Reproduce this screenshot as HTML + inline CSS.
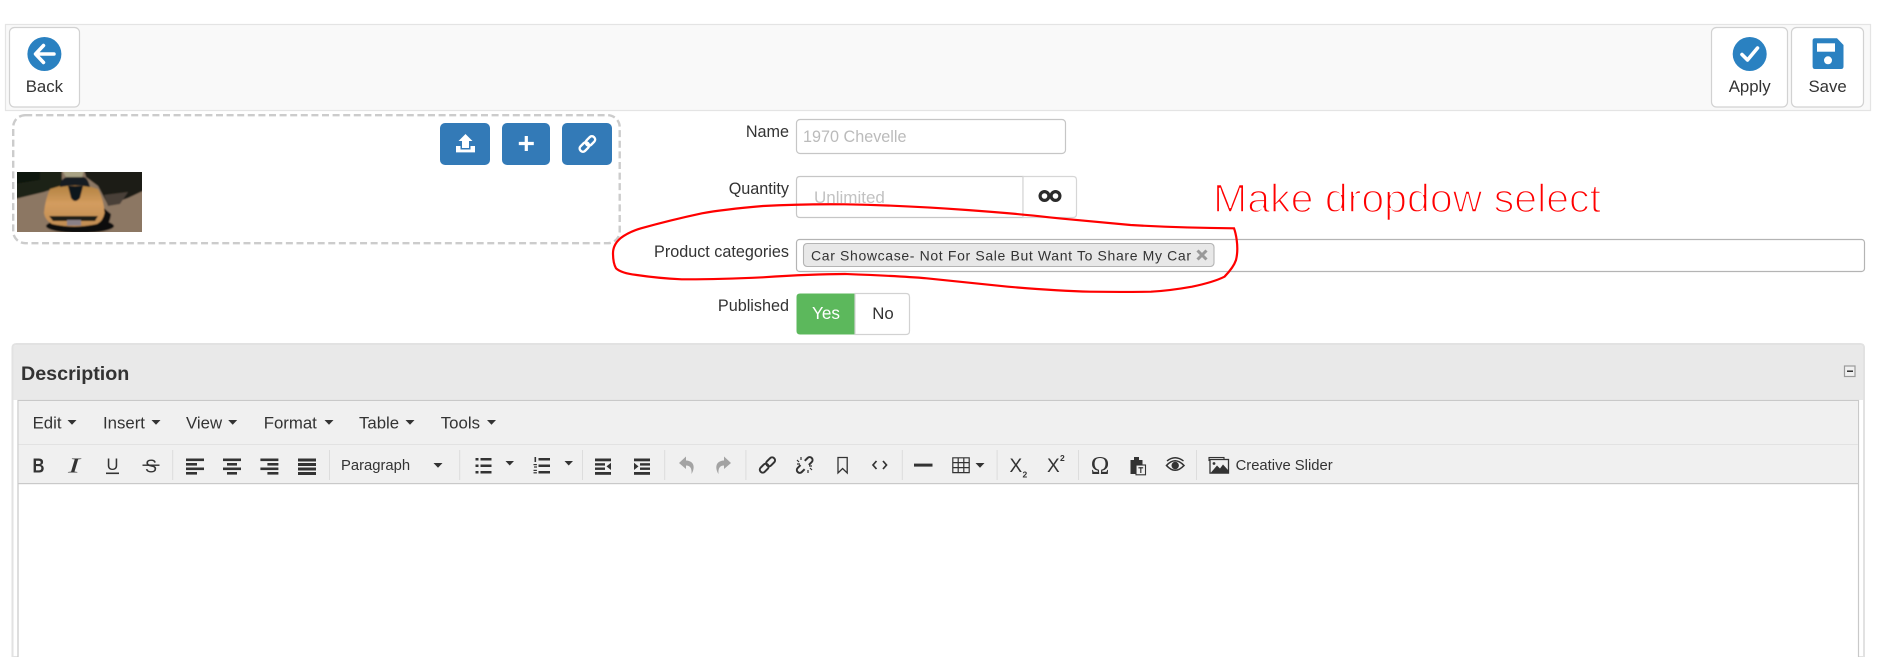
<!DOCTYPE html>
<html><head><meta charset="utf-8"><title>Edit product</title>
<style>
html,body{margin:0;padding:0;background:#fff;width:1884px;height:657px;overflow:hidden}
svg{display:block}
text{font-family:"Liberation Sans",sans-serif;fill:#333}
.l{font-size:16.2px;text-anchor:end}
.m{font-size:16.8px}
.c{font-size:16.8px;text-anchor:middle}
.i{fill:#333}
.s{fill:none;stroke:#333}
</style></head><body>
<svg width="1884" height="657" viewBox="0 0 1884 657" xmlns="http://www.w3.org/2000/svg">
<defs>
<filter id="b" x="-5%" y="-5%" width="110%" height="110%"><feGaussianBlur stdDeviation=".9"/></filter>
<linearGradient id="g" x1="0" y1="0" x2="0" y2="1"><stop offset="0" stop-color="#b08040"/><stop offset=".45" stop-color="#d39c5e"/><stop offset="1" stop-color="#c08c52"/></linearGradient>
<clipPath id="cc"><rect x="17" y="172" width="125" height="60"/></clipPath>
</defs>

<!-- top toolbar -->
<rect x="5.5" y="24.5" width="1865" height="86" fill="#f9f9f9" stroke="#e4e4e4" stroke-width="1.2"/>
<rect x="9.5" y="27.5" width="70" height="79.5" rx="5" fill="#fff" stroke="#d2d2d2" stroke-width="1.2"/>
<rect x="1711.5" y="27.5" width="76" height="79.5" rx="5" fill="#fff" stroke="#d2d2d2" stroke-width="1.2"/>
<rect x="1791.5" y="27.5" width="72" height="79.5" rx="5" fill="#fff" stroke="#d2d2d2" stroke-width="1.2"/>
<circle cx="44.4" cy="54" r="17" fill="#2a81c1"/>
<path d="M43.5 45.5 L35.5 54 L43.5 62.5 M37 54 H54" fill="none" stroke="#fff" stroke-width="3.5" stroke-linecap="round" stroke-linejoin="round"/>
<circle cx="1749.7" cy="54" r="17" fill="#2a81c1"/>
<path d="M1742 54.5 L1747.5 60 L1757.5 48" fill="none" stroke="#fff" stroke-width="3.6" stroke-linecap="round" stroke-linejoin="round"/>
<path d="M1815 38.3 H1837 L1843.5 45 V66.5 Q1843.5 69 1841 69 H1815 Q1812.6 69 1812.6 66.5 V40.8 Q1812.6 38.3 1815 38.3 Z" fill="#2a81c1"/>
<rect x="1817" y="43.3" width="18" height="8.4" fill="#fff"/>
<circle cx="1828" cy="60.3" r="4" fill="#fff"/>
<text class="c" x="44.4" y="92">Back</text>
<text class="c" x="1749.7" y="92">Apply</text>
<text class="c" x="1827.6" y="92">Save</text>

<!-- image box -->
<rect x="13.2" y="115.2" width="606.5" height="128" rx="12" fill="#fff" stroke="#ccc" stroke-width="2.4" stroke-dasharray="7 3.6"/>
<rect x="440" y="123" width="50" height="42" rx="5" fill="#337ab7"/>
<rect x="502" y="123" width="48" height="42" rx="5" fill="#337ab7"/>
<rect x="562" y="123" width="50" height="42" rx="5" fill="#337ab7"/>
<path d="M465.5 134 L472.5 141 H469 V148 H462 V141 H458.5 Z" fill="#fff"/>
<path d="M456 146 H460.5 V149.5 H470.5 V146 H475 V152.4 H456 Z" fill="#fff"/>
<path d="M526.3 136 V151 M518.8 143.5 H533.8" stroke="#fff" stroke-width="3.2" fill="none"/>
<g transform="translate(587.4 144) rotate(45)" fill="none" stroke="#fff" stroke-width="2.4">
<rect x="-3.2" y="-9.5" width="6.4" height="10.5" rx="3"/>
<rect x="-3.2" y="-1" width="6.4" height="10.5" rx="3"/>
</g>

<!-- car -->
<g clip-path="url(#cc)"><g filter="url(#b)">
<rect x="15" y="170" width="130" height="64" fill="#8c7764"/>
<path d="M15 170 H62 V186 L44 192 L15 199 Z" fill="#1a2416"/>
<path d="M15 170 H40 V180 L15 184 Z" fill="#0f170f"/>
<path d="M62 170 H84 L82 177 H66 Z" fill="#a8a284"/>
<path d="M84 170 H145 V190 L128 198 L108 205 L98 186 L86 177 Z" fill="#1c1c14"/>
<path d="M104 195 L128 192 L120 204 L108 206 Z" fill="#4a4138"/>
<ellipse cx="80" cy="226" rx="34" ry="7" fill="#0c0a09"/>
<path d="M100 205 L111 214 Q110 226 100 231 H90 Z" fill="#0c0a09"/>
<path d="M60 186 Q74 183 88 186 L98 189 Q104 200 104.500 213 Q103 221 97 224 Q74 229 52 224 Q45 220 44 213 Q45 200 50 189 Z" fill="url(#g)"/>
<path d="M60 187 Q61 178 67 177 H84 Q88 178 90 187 Q75 184 60 187 Z" fill="#141a22"/>
<path d="M68 186 H83 L80 198 Q75 204 71 198 Z" fill="#11131a"/>
<path d="M49 216 H98 L95 221 H53 Z" fill="#1f1a15"/>
<rect x="67" y="220" width="14" height="5.500" fill="#8a8088"/>
</g></g>

<!-- form labels -->
<text class="l" x="789" y="137">Name</text>
<text class="l" x="789" y="194">Quantity</text>
<text class="l" x="789" y="257">Product categories</text>
<text class="l" x="789" y="311">Published</text>

<rect x="796.5" y="119.5" width="269" height="34" rx="3.5" fill="#fff" stroke="#c6c6c6" stroke-width="1.2"/>
<text x="803" y="142" font-size="16.2" style="fill:#bbb">1970 Chevelle</text>

<path d="M1023 176.5 H800 Q796.5 176.5 796.5 180 V214 Q796.5 217.5 800 217.5 H1023 Z" fill="#fff" stroke="#c6c6c6" stroke-width="1.2"/>
<path d="M1023 176.5 H1073 Q1076.5 176.5 1076.5 180 V214 Q1076.5 217.5 1073 217.5 H1023 Z" fill="#fff" stroke="#d6d6d6" stroke-width="1.2"/>
<text x="814" y="203" font-size="17" style="fill:#c2c2c2">Unlimited</text>
<circle cx="1044.5" cy="196" r="4.4" fill="none" stroke="#2b2b2b" stroke-width="3.2"/>
<circle cx="1055.500" cy="196" r="4.4" fill="none" stroke="#2b2b2b" stroke-width="3.2"/>

<rect x="796.5" y="239.5" width="1068" height="32" rx="3" fill="#fff" stroke="#b4b4b4" stroke-width="1.2"/>
<rect x="803.5" y="243.5" width="410.5" height="23" rx="3.6" fill="#e8e8e8" stroke="#b4b4b4" stroke-width="1.1"/>
<text x="811" y="260.5" font-size="14" textLength="380" style="fill:#333">Car Showcase- Not For Sale But Want To Share My Car</text>
<path d="M1197.5 250.5 L1206.5 259.5 M1206.5 250.5 L1197.5 259.5" stroke="#999" stroke-width="3" fill="none"/>

<path d="M855 293.5 H800 Q796.5 293.5 796.5 297 V331 Q796.5 334.5 800 334.5 H855 Z" fill="#5cb85c"/>
<path d="M855 293.5 H906 Q909.5 293.5 909.5 297 V331 Q909.5 334.5 906 334.5 H855 Z" fill="#fff" stroke="#d2d2d2" stroke-width="1.2"/>
<text x="826" y="319" font-size="17.2" text-anchor="middle" style="fill:#fff">Yes</text>
<text x="883" y="319" font-size="16.8" text-anchor="middle">No</text>

<!-- description panel -->
<path d="M12.5 657 V348 Q12.5 344 16.5 344 H1860 Q1864 344 1864 348 V657 Z" fill="#fff" stroke="#e2e2e2" stroke-width="2"/>
<path d="M13.5 400 V348 Q13.5 345 16.5 345 H1860 Q1863 345 1863 348 V400 Z" fill="#e9e9e9"/>
<text x="21" y="380" font-size="19.7" font-weight="bold">Description</text>
<rect x="1844.5" y="366" width="10.5" height="10.5" fill="#f0f0f0" stroke="#9a9a9a" stroke-width="1.2"/>
<rect x="1847" y="370.5" width="6" height="1.4" fill="#222"/>

<rect x="18" y="400.5" width="1840.5" height="260" fill="#fff" stroke="#c9c9c9" stroke-width="1.2"/>
<rect x="18.6" y="401" width="1839.3" height="82.5" fill="#f0f0f0"/>
<rect x="18.6" y="444" width="1839.3" height="1" fill="#e2e2e2"/>
<rect x="18" y="483" width="1841" height="1.2" fill="#c9c9c9"/>

<!-- menu -->
<g class="menu">
<text class="m" x="32.6" y="428.5">Edit</text>
<text class="m" x="103" y="428.5">Insert</text>
<text class="m" x="186" y="428.5">View</text>
<text class="m" x="263.7" y="428.5">Format</text>
<text class="m" x="359" y="428.5">Table</text>
<text class="m" x="440.8" y="428.5">Tools</text>
</g>
<g fill="#333">
<path d="M67.5 420 H76.5 L72 424.8 Z"/><path d="M151.5 420 H160.5 L156 424.8 Z"/><path d="M228.2 420 H237.2 L232.7 424.8 Z"/><path d="M324.5 420 H333.5 L329 424.8 Z"/><path d="M405.5 420 H414.5 L410 424.8 Z"/><path d="M487 420 H496 L491.5 424.8 Z"/>
<path d="M433.5 463 H442.5 L438 467.8 Z"/><path d="M505.5 461 H514 L509.7 465.5 Z"/><path d="M564.5 461 H573 L568.7 465.5 Z"/><path d="M975.5 463 H984.5 L980 467.8 Z"/>
</g>

<!-- separators -->
<g fill="#ddd">
<rect x="172.2" y="450" width="1" height="30"/><rect x="329" y="450" width="1" height="30"/><rect x="459.2" y="450" width="1" height="30"/><rect x="582" y="450" width="1" height="30"/><rect x="664.2" y="450" width="1" height="30"/><rect x="745.4" y="450" width="1" height="30"/><rect x="901.8" y="450" width="1" height="30"/><rect x="996.6" y="450" width="1" height="30"/><rect x="1078" y="450" width="1" height="30"/><rect x="1196" y="450" width="1" height="30"/>
</g>

<!-- format icons -->
<text x="32.5" y="472.5" font-size="20" font-weight="bold" textLength="12" lengthAdjust="spacingAndGlyphs">B</text>
<text x="68" y="472.5" font-size="21" font-style="italic" style="font-family:'Liberation Serif',serif" textLength="12" lengthAdjust="spacingAndGlyphs">I</text>
<text x="106.5" y="470" font-size="17" textLength="12" lengthAdjust="spacingAndGlyphs">U</text>
<rect x="106" y="472.5" width="13" height="1.6" class="i"/>
<text x="145" y="472.5" font-size="18" textLength="12" lengthAdjust="spacingAndGlyphs">S</text>
<rect x="142.5" y="464.5" width="17" height="1.4" class="i"/>
<g class="i">
<rect x="186" y="458.5" width="18" height="2.6"/><rect x="186" y="463" width="11" height="2.6"/><rect x="186" y="467.5" width="18" height="2.6"/><rect x="186" y="472" width="11" height="2.6"/>
<rect x="223" y="458.5" width="18" height="2.6"/><rect x="227" y="463" width="10" height="2.6"/><rect x="223" y="467.5" width="18" height="2.6"/><rect x="227" y="472" width="10" height="2.6"/>
<rect x="260.4" y="458.5" width="18" height="2.6"/><rect x="267.4" y="463" width="11" height="2.6"/><rect x="260.4" y="467.5" width="18" height="2.6"/><rect x="267.4" y="472" width="11" height="2.6"/>
<rect x="298" y="458.5" width="18" height="3"/><rect x="298" y="463" width="18" height="3"/><rect x="298" y="467.5" width="18" height="3"/><rect x="298" y="472" width="18" height="3"/>
<!-- bullets -->
<rect x="475.5" y="458" width="3" height="2.5"/><rect x="475.5" y="464.5" width="3" height="2.5"/><rect x="475.5" y="471" width="3" height="2.5"/>
<rect x="480.5" y="458" width="11" height="2.5"/><rect x="480.5" y="464.5" width="11" height="2.5"/><rect x="480.5" y="471" width="11" height="2.5"/>
<!-- number list -->
<rect x="534.5" y="457" width="1.6" height="5"/><rect x="533.5" y="464" width="3.4" height="1.2"/><rect x="534" y="466.4" width="3" height="1.2"/><rect x="533.5" y="469.8" width="3.4" height="1.2"/><rect x="533.5" y="472.2" width="3.4" height="1.2"/>
<rect x="538.5" y="458" width="11.5" height="2.5"/><rect x="538.5" y="464.5" width="11.5" height="2.5"/><rect x="538.5" y="471" width="11.5" height="2.5"/>
<!-- outdent -->
<rect x="595" y="458.5" width="16" height="2.8"/><rect x="595" y="463.2" width="10" height="2.4"/><rect x="595" y="467.5" width="10" height="2.4"/><rect x="595" y="472" width="16" height="2.8"/>
<path d="M611 462.8 V470 L606.5 466.4 Z"/>
<!-- indent -->
<rect x="634" y="458.5" width="16" height="2.8"/><rect x="640" y="463.2" width="10" height="2.4"/><rect x="640" y="467.5" width="10" height="2.4"/><rect x="634" y="472" width="16" height="2.8"/>
<path d="M634 462.8 V470 L638.5 466.4 Z"/>
</g>

<!-- undo / redo -->
<path d="M686 456.5 L679 463 L686 469 V465.5 C690 465.5 692 468 691.5 474 C695 468.5 695 461 686 460.5 Z" fill="#a3a3a3"/>
<path d="M724 456.5 L731 463 L724 469 V465.5 C720 465.5 718 468 718.5 474 C715 468.500 715 461 724 460.5 Z" fill="#a3a3a3"/>

<!-- link -->
<g transform="translate(767.4 465) rotate(45)" fill="none" stroke="#333" stroke-width="2">
<rect x="-2.9" y="-9.5" width="5.8" height="10" rx="2.8"/><rect x="-2.9" y="-.5" width="5.8" height="10" rx="2.8"/>
</g>
<!-- unlink -->
<g transform="translate(804.7 465) rotate(45)" fill="none" stroke="#333" stroke-width="2">
<path d="M-2.9 -3 V-7 A2.9 2.9 0 0 1 2.9 -7 V-3"/><path d="M-2.9 3 V7 A2.9 2.9 0 0 0 2.9 7 V3"/>
</g>
<path d="M801 457 V460 M797 460 L799 462 M812 470 L810 468 M808 473 V470 M812 466 H809 M797 464 H800" stroke="#333" stroke-width="1.2" fill="none"/>
<!-- bookmark -->
<path d="M838 457.5 H847.2 V473 L842.6 468.5 L838 473 Z" fill="none" stroke="#333" stroke-width="1.3"/>
<!-- code -->
<path d="M876.5 461 L873 465 L876.5 469 M883 461 L886.5 465 L883 469" fill="none" stroke="#333" stroke-width="1.7"/>
<!-- hr -->
<rect x="914" y="463.6" width="18.5" height="3" class="i"/>
<!-- table -->
<path d="M952.8 457.8 H969.2 V472.6 H952.8 Z M952.8 462.6 H969.2 M952.8 467.6 H969.2 M958.2 457.8 V472.6 M963.8 457.8 V472.6" fill="none" stroke="#333" stroke-width="1.2"/>
<!-- sub / sup -->
<text x="1009.5" y="472" font-size="19">X</text>
<text x="1022.5" y="477.5" font-size="8.5" font-weight="bold">2</text>
<text x="1047" y="472" font-size="19">X</text>
<text x="1060" y="461" font-size="8.5" font-weight="bold">2</text>
<!-- omega -->
<text x="1100" y="473.5" font-size="25" text-anchor="middle" style="font-family:'Liberation Serif',serif">Ω</text>
<!-- paste -->
<path d="M1130.5 460 H1142.5 V474 H1130.5 Z M1134 457 H1139 V460 H1134 Z" class="i"/>
<rect x="1136" y="465" width="9.5" height="9.8" fill="#f0f0f0" stroke="#333" stroke-width="1.1"/>
<rect x="1138.4" y="467.2" width="4.8" height="1.2" class="i"/><rect x="1140.2" y="467.2" width="1.2" height="5.8" class="i"/>
<!-- eye -->
<path d="M1166.5 465.5 Q1175 456 1184 465.5 Q1175 475 1166.5 465.5 Z" fill="none" stroke="#333" stroke-width="1.6"/>
<path d="M1167 461 Q1175 454.5 1183.5 461" fill="none" stroke="#333" stroke-width="1.4"/>
<circle cx="1175.2" cy="465.5" r="3.7" class="i"/>
<!-- image icon -->
<rect x="1209" y="457.5" width="15" height="3" fill="none" stroke="#333" stroke-width="1.1"/>
<rect x="1210" y="459.5" width="18.5" height="13.6" fill="#f0f0f0" stroke="#333" stroke-width="1.3"/>
<path d="M1211 472.5 L1217 465.5 L1220 468.5 L1223 464.5 L1228 470 V472.5 Z" class="i"/>
<circle cx="1214" cy="463.5" r="1.4" class="i"/>
<text x="341" y="470" font-size="14.8">Paragraph</text>
<text x="1235.6" y="470" font-size="14.8">Creative Slider</text>

<!-- red annotation -->
<text x="1213" y="212" font-size="40" textLength="388" lengthAdjust="spacingAndGlyphs" style="fill:#f00;stroke:#fff;stroke-width:1.6px">Make dropdow select</text>
<path d="M1234 228.3 C1200 228 1165 227 1130.6 225 C1100 222 1075 220 1049 217.3 C1020 214 995 212 967 210 C925 207 885 205 845 204.3 C815 204 790 204.5 763 206 C740 208 720 210 702 213.3 C680 218 660 223 641 228.3 C632 231 626 234 620.4 238.3 C615 243 613 248 613 253.3 C613 259 613.5 264 616 268.3 C620 272 628 274 636.7 275 C650 277 665 278.5 681.6 279.3 C710 279.5 737 278.5 763 277.3 C790 275.5 818 274 845 274 C872 275 900 276 926.5 278.3 C953 281 980 284 1008 286.7 C1035 289 1062 291 1090 291.7 C1110 292 1131 292 1151 291.7 C1165 291 1179 289 1192 286.7 C1205 284 1216 281 1224.5 276.7 C1230 271 1234 266 1236 260 C1238 252 1237.5 246 1236.7 240 C1236 235 1235 231 1234 228.3 Z" fill="none" stroke="#f00" stroke-width="2.2"/>
</svg>
</body></html>
